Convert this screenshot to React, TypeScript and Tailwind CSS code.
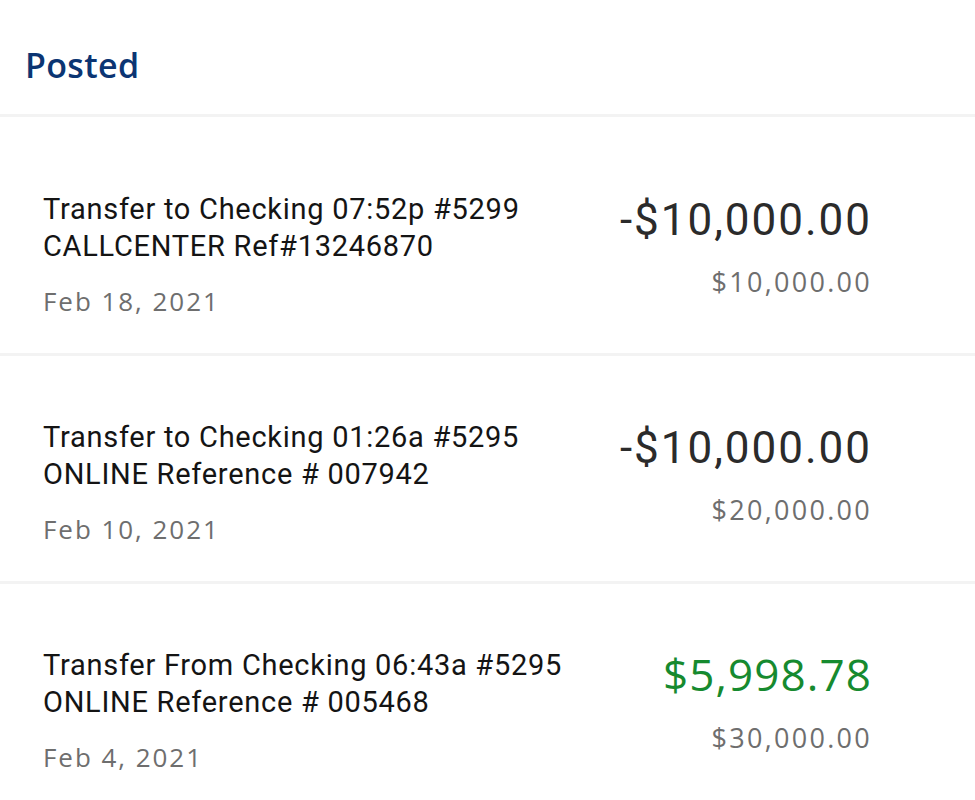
const ROWS = [
  {
    title: 'Transfer to Checking 07:52p #5299',
    sub: 'CALLCENTER Ref#13246870',
    date: 'Feb 18, 2021',
    amount: '-$10,000.00',
    credit: false,
    balance: '$10,000.00',
  },
  {
    title: 'Transfer to Checking 01:26a #5295',
    sub: 'ONLINE Reference # 007942',
    date: 'Feb 10, 2021',
    amount: '-$10,000.00',
    credit: false,
    balance: '$20,000.00',
  },
  {
    title: 'Transfer From Checking 06:43a #5295',
    sub: 'ONLINE Reference # 005468',
    date: 'Feb 4, 2021',
    amount: '$5,998.78',
    credit: true,
    balance: '$30,000.00',
  },
]

export default function App() {
  return (
    <div className="w-[975px] h-[800px] bg-white overflow-hidden">
      <div className="h-[114px] pl-[25px] pt-[41px]">
        <h2 className="text-[34px] leading-[48px] font-semibold tracking-[0.01em] text-[#0b3573] font-['Open_Sans',sans-serif]">
          Posted
        </h2>
      </div>
      <div className="h-[3px] bg-[#f3f3f3]" />

      {ROWS.map((row, i) => (
        <div key={i}>
          <div
            className={`flex justify-between pl-[43px] pr-[103px] pb-9 ${i === 0 ? 'pt-[74px]' : 'pt-[63px]'}`}
          >
            <div className="flex flex-col">
              <p className="text-[29px] leading-[37px] tracking-[0.025em] text-[#141414] font-['Roboto',sans-serif]">
                {row.title}
              </p>
              <p className="text-[29px] leading-[37px] tracking-[0.025em] text-[#141414] font-['Roboto',sans-serif]">
                {row.sub}
              </p>
              <p className="mt-5 text-[26px] leading-[32px] tracking-[0.075em] text-[#6e6e6e] font-['Open_Sans',sans-serif]">
                {row.date}
              </p>
            </div>

            <div className="flex flex-col items-end">
              {row.credit ? (
                <span className="text-[44px] leading-[54px] tracking-[0.025em] text-[#168a2f] font-['Open_Sans',sans-serif]">
                  {row.amount}
                </span>
              ) : (
                <span className="mt-[2px] text-[44px] leading-[54px] tracking-[0.045em] text-[#2b2b2b] font-['Roboto',sans-serif]">
                  {row.amount}
                </span>
              )}
              <span className={`${row.credit ? 'mt-[21px]' : 'mt-[19px]'} text-[27px] leading-[32px] tracking-[0.085em] text-[#6e6e6e] font-['Open_Sans',sans-serif]`}>
                {row.balance}
              </span>
            </div>
          </div>
          <div className="h-[3px] bg-[#f3f3f3]" />
        </div>
      ))}
    </div>
  )
}
